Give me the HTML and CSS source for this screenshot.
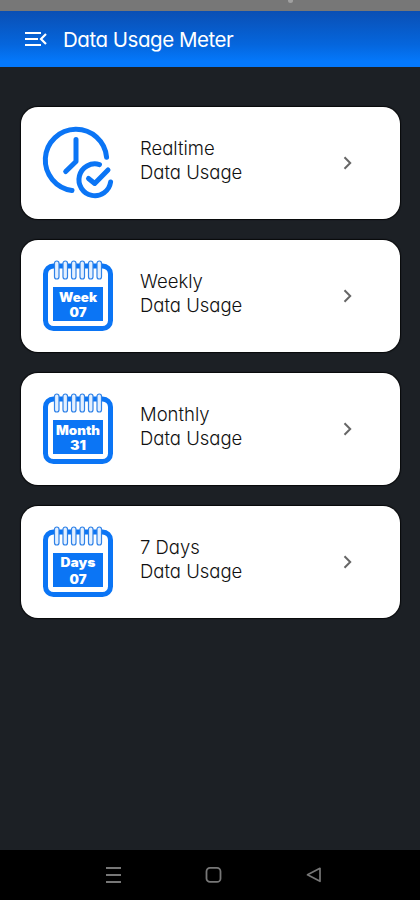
FILE: index.html
```html
<!DOCTYPE html>
<html lang="en">
<head>
<meta charset="utf-8">
<title>Data Usage Meter</title>
<link rel="stylesheet" href="styles.css">
</head>
<body>
<svg class="defs" aria-hidden="true">
  <defs>
    <g id="calendar">
      <rect x="2.500" y="6" width="65" height="62.500" rx="8" fill="#fff" stroke="#0b75f5" stroke-width="5"/>
      <rect x="10" y="27" width="50" height="34" fill="#0b75f5"/>
      <g fill="#e4f0ff" stroke="#2f82e8" stroke-width="1.200">
        <rect x="11.500" y="1" width="4.500" height="18" rx="2.250"/>
        <rect x="20" y="1" width="4.500" height="18" rx="2.250"/>
        <rect x="28.500" y="1" width="4.500" height="18" rx="2.250"/>
        <rect x="37" y="1" width="4.500" height="18" rx="2.250"/>
        <rect x="45.500" y="1" width="4.500" height="18" rx="2.250"/>
        <rect x="54" y="1" width="4.500" height="18" rx="2.250"/>
      </g>
    </g>
    <path id="chevron" d="M1.500 1.300 7.200 7 1.500 12.700" fill="none" stroke="#666" stroke-width="2"/>
  </defs>
</svg>
<div class="status"><i class="camera"></i></div>
<header class="bar">
  <svg class="menu" width="22" height="16" viewBox="0 0 22 16" fill="none" stroke="#fff" stroke-width="2.200">
    <path d="M0 2H16M0 8H13M0 14H16M21 3 16 8 21 13"/>
  </svg>
  <h1 class="title">Data Usage Meter</h1>
</header>
<main class="list">
  <a class="card">
    <svg class="icon" width="72" height="72" viewBox="0 0 72 72" fill="none" stroke="#0b75f5" stroke-width="5" stroke-linecap="round" stroke-linejoin="round">
      <path d="M63.580 30.300A30.700 30.700 0 1 0 29 63.440"/>
      <path d="M33 12.500V34.500L22.700 44.500"/>
      <path d="M56.500 37.600A15.900 15.900 0 1 0 67.600 55"/>
      <path d="M45.500 51.500 51.700 56.500 65 43"/>
    </svg>
    <p class="label"><span>Realtime</span><span>Data Usage</span></p>
    <svg class="go" width="10" height="14"><use href="#chevron"/></svg>
  </a>
  <a class="card">
    <svg class="icon" width="72" height="72" viewBox="0 0 72 72">
      <use href="#calendar"/>
      <text class="cal" x="35" y="42" textLength="38" lengthAdjust="spacingAndGlyphs">Week</text>
      <text class="cal" x="35" y="56.500" textLength="17" lengthAdjust="spacingAndGlyphs">07</text>
    </svg>
    <p class="label"><span>Weekly</span><span>Data Usage</span></p>
    <svg class="go" width="10" height="14"><use href="#chevron"/></svg>
  </a>
  <a class="card">
    <svg class="icon" width="72" height="72" viewBox="0 0 72 72">
      <use href="#calendar"/>
      <text class="cal" x="35" y="41.500" textLength="44" lengthAdjust="spacingAndGlyphs">Month</text>
      <text class="cal" x="35" y="56.500" textLength="16" lengthAdjust="spacingAndGlyphs">31</text>
    </svg>
    <p class="label"><span>Monthly</span><span>Data Usage</span></p>
    <svg class="go" width="10" height="14"><use href="#chevron"/></svg>
  </a>
  <a class="card">
    <svg class="icon" width="72" height="72" viewBox="0 0 72 72">
      <use href="#calendar"/>
      <text class="cal" x="35" y="41" textLength="35" lengthAdjust="spacingAndGlyphs">Days</text>
      <text class="cal" x="35" y="57.500" textLength="17" lengthAdjust="spacingAndGlyphs">07</text>
    </svg>
    <p class="label"><span>7 Days</span><span>Data Usage</span></p>
    <svg class="go" width="10" height="14"><use href="#chevron"/></svg>
  </a>
</main>
<nav class="nav">
  <svg width="16" height="18" viewBox="0 0 16 18" fill="none" stroke="#777" stroke-width="2"><path d="M0 2H15M0 9H15M0 16H15"/></svg>
  <svg width="17" height="18" viewBox="0 0 17 18" fill="none" stroke="#777" stroke-width="1.800"><rect x="1.500" y="1.900" width="14" height="14" rx="3.500"/></svg>
  <svg width="16" height="18" viewBox="0 0 16 18" fill="none" stroke="#777" stroke-width="1.700" stroke-linejoin="round"><path d="M1.500 8.800 14 2.300V15.300Z"/></svg>
</nav>
</body>
</html>
```
FILE: styles.css
```css
* { box-sizing: border-box; }
body {
  margin: 0;
  height: 900px;
  display: flex;
  flex-direction: column;
  background: #1c2025;
  font-family: Inter, sans-serif;
  font-feature-settings: "cv11" 1;
  overflow: hidden;
}
.defs { position: absolute; width: 0; height: 0; }
.status {
  height: 11px;
  padding-left: 288px;
  background: #777;
}
.camera {
  display: block;
  width: 5px;
  height: 3px;
  border-radius: 0 0 3px 3px;
  background: #a0a0a0;
}
.bar {
  height: 56px;
  display: flex;
  align-items: center;
  padding-left: 25px;
  background: linear-gradient(#0a4fb4, #0566dd 60%, #0478fb 90%);
}
.title {
  margin: 0 0 0 16px;
  color: #fff;
  font-size: 20.5px;
  font-weight: 400;
  letter-spacing: -0.47px;
  white-space: nowrap;
}
.list {
  flex: 1;
  display: flex;
  flex-direction: column;
  gap: 21px;
  padding: 40px 20px 0 21px;
}
.card {
  height: 112px;
  display: flex;
  align-items: center;
  padding: 0 47px 0 22px;
  border-radius: 17px;
  background: #fff;
  box-shadow: 0 0 1px 1px #08090b;
}
.icon { flex: none; overflow: visible; }
.cal {
  fill: #fff;
  font: 900 12.5px Inter, sans-serif;
  text-anchor: middle;
}
.label {
  margin: 0 0 5px 25px;
  display: flex;
  flex-direction: column;
  align-items: flex-start;
  color: #111;
  font-size: 18.5px;
  font-weight: 300;
  line-height: 23.5px;
  white-space: nowrap;
}
.go { margin-left: auto; }
.nav {
  height: 50px;
  display: grid;
  grid-template-columns: repeat(3, 100px);
  justify-content: center;
  align-items: center;
  justify-items: center;
  padding-left: 7px;
  background: #000;
}
```
